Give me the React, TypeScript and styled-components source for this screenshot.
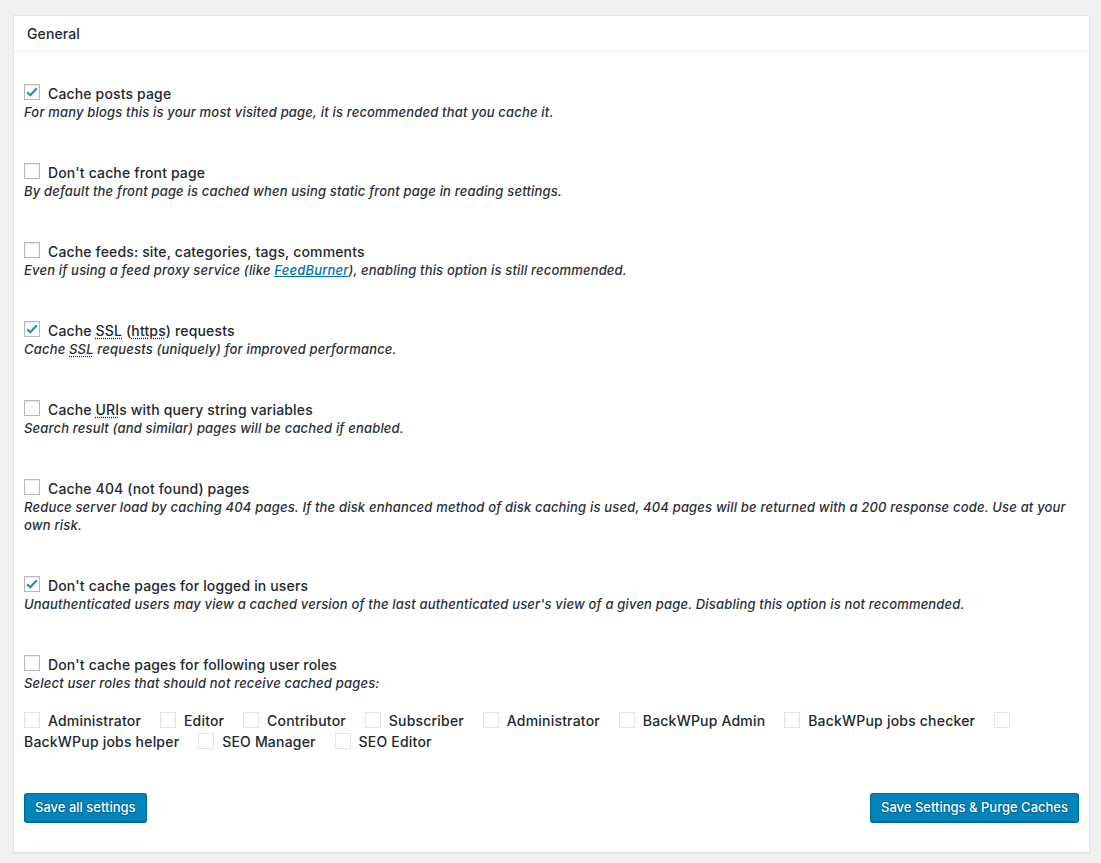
import { type FC, type ReactNode } from "react"
import styled, { createGlobalStyle } from "styled-components"

const GlobalStyle = createGlobalStyle`
  html, body {
    margin: 0;
    padding: 0;
    background: #f1f1f1;
  }
  body {
    font-family: Inter, "Liberation Sans", Arial, sans-serif;
    color: #23282d;
  }
`

const Page = styled.div`
  padding: 15px 11px 10px 13px;
`

const Panel = styled.section`
  background: #fff;
  border: 1px solid #e5e5e5;
  box-shadow: 0 1px 1px rgba(0, 0, 0, 0.04);
`

const PanelHeader = styled.h3`
  margin: 0;
  height: 35px;
  line-height: 35px;
  padding: 0 13px;
  font-size: 14px;
  font-weight: 500;
  letter-spacing: 0.1px;
  border-bottom: 1px solid #eee;
`

const PanelBody = styled.div`
  padding: 31px 10px 30px 10px;
`

const Option = styled.div`
  margin-bottom: 41px;
`

const OptionLabel = styled.label`
  display: flex;
  align-items: center;
  height: 20px;
  font-size: 14px;
  font-weight: 500;
  letter-spacing: 0.15px;
  color: #23282d;
`

const Description = styled.p`
  margin: 0;
  font-size: 13px;
  line-height: 18px;
  font-style: italic;
  font-weight: 500;
  letter-spacing: 0.18px;
  color: #2a2f34;

  a {
    color: #0073aa;
    text-decoration: underline;
  }
`

const Abbr = styled.abbr`
  text-decoration: underline dotted;
  text-underline-offset: 2px;
`

const Box = styled.span<{ $faint?: boolean }>`
  display: inline-flex;
  align-items: center;
  justify-content: center;
  flex: none;
  box-sizing: border-box;
  width: 16px;
  height: 16px;
  border: 1px solid ${p => (p.$faint ? "#e3e5e7" : "#b4b9be")};
  background: #fff;
  box-shadow: ${p => (p.$faint ? "none" : "inset 0 1px 2px rgba(0, 0, 0, 0.1)")};
  margin-right: 8px;
  margin-top: -2px;
`

const Check: FC<{ on?: boolean }> = ({ on }) => (
  <Box>
    {on && (
      <svg width="14" height="14" viewBox="0 0 14 14">
        <path d="M2.2 7.2 L5.3 10.3 L11.8 3.2" fill="none" stroke="#1e8cbe" strokeWidth="2.1" />
      </svg>
    )}
  </Box>
)

const Roles = styled.div`
  margin-top: 18px;
  font-size: 14px;
  font-weight: 500;
  letter-spacing: 0.2px;
  line-height: 21px;
  margin-bottom: 41px;
`

const RoleBox = styled(Box)`
  display: inline-block;
  vertical-align: middle;
  margin: -4px 4px 0 0;
`

const RoleLabel = styled.span`
  display: inline-block;
  white-space: nowrap;
  margin-right: 15px;
`

const Actions = styled.div`
  display: flex;
  justify-content: space-between;
`

const Button = styled.button`
  height: 29px;
  padding: 0 10px 1px;
  font-family: inherit;
  font-size: 13px;
  font-weight: 500;
  color: #fff;
  background: #0085ba;
  border: 1px solid;
  border-color: #0073aa #006799 #006799;
  border-radius: 3px;
  box-shadow: 0 1px 0 #006799;
  text-shadow: 0 -1px 1px #006799, 1px 0 1px #006799, 0 1px 1px #006799, -1px 0 1px #006799;
  cursor: pointer;
`

type Item = { on: boolean; label: ReactNode; desc: ReactNode }

const items: Item[] = [
  {
    on: true,
    label: "Cache posts page",
    desc: "For many blogs this is your most visited page, it is recommended that you cache it.",
  },
  {
    on: false,
    label: "Don't cache front page",
    desc: "By default the front page is cached when using static front page in reading settings.",
  },
  {
    on: false,
    label: "Cache feeds: site, categories, tags, comments",
    desc: (
      <>
        Even if using a feed proxy service (like <a href="#">FeedBurner</a>), enabling this option is
        still recommended.
      </>
    ),
  },
  {
    on: true,
    label: (
      <>
        Cache&nbsp;<Abbr>SSL</Abbr>&nbsp;(<Abbr>https</Abbr>)&nbsp;requests
      </>
    ),
    desc: (
      <>
        Cache <Abbr>SSL</Abbr> requests (uniquely) for improved performance.
      </>
    ),
  },
  {
    on: false,
    label: (
      <>
        Cache&nbsp;<Abbr>URI</Abbr>s&nbsp;with query string variables
      </>
    ),
    desc: "Search result (and similar) pages will be cached if enabled.",
  },
  {
    on: false,
    label: "Cache 404 (not found) pages",
    desc: "Reduce server load by caching 404 pages. If the disk enhanced method of disk caching is used, 404 pages will be returned with a 200 response code. Use at your own risk.",
  },
  {
    on: true,
    label: "Don't cache pages for logged in users",
    desc: "Unauthenticated users may view a cached version of the last authenticated user's view of a given page. Disabling this option is not recommended.",
  },
]

const roles = [
  "Administrator",
  "Editor",
  "Contributor",
  "Subscriber",
  "Administrator",
  "BackWPup Admin",
  "BackWPup jobs checker",
  "BackWPup jobs helper",
  "SEO Manager",
  "SEO Editor",
]

const App: FC = () => (
  <Page>
    <GlobalStyle />
    <Panel>
      <PanelHeader>General</PanelHeader>
      <PanelBody>
        {items.map((item, i) => (
          <Option key={i}>
            <OptionLabel>
              <Check on={item.on} />
              <span>{item.label}</span>
            </OptionLabel>
            <Description>{item.desc}</Description>
          </Option>
        ))}
        <div>
          <OptionLabel>
            <Check />
            <span>Don't cache pages for following user roles</span>
          </OptionLabel>
          <Description>Select user roles that should not receive cached pages:</Description>
        </div>
        <Roles>
          {roles.map((r, i) => (
            <span key={i}>
              <RoleBox $faint /> <RoleLabel>{r}</RoleLabel>{" "}
            </span>
          ))}
        </Roles>
        <Actions>
          <Button>Save all settings</Button>
          <Button>Save Settings &amp; Purge Caches</Button>
        </Actions>
      </PanelBody>
    </Panel>
  </Page>
)

export default App
